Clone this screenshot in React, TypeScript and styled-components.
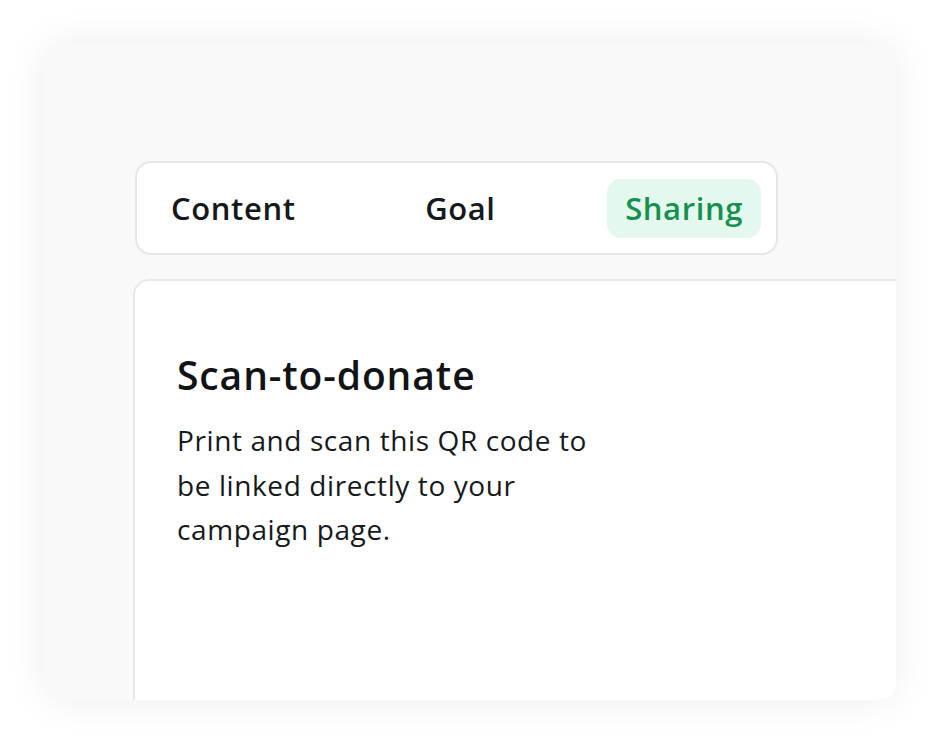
import React from "react";
import styled, { createGlobalStyle } from "styled-components";

const Global = createGlobalStyle`
  html, body { margin: 0; padding: 0; background: #ffffff; }
  body { font-family: "Open Sans", Lato, "Liberation Sans", sans-serif; }
`;

const Page = styled.div`
  width: 938px;
  height: 742px;
  padding: 44px 0 0 44px;
  box-sizing: border-box;
`;

const Frame = styled.div`
  width: 852px;
  height: 656px;
  background: #f9f9f9;
  border-radius: 16px;
  box-shadow: 0 0 40px rgba(0, 0, 0, 0.07);
  overflow: hidden;
  display: flex;
  flex-direction: column;
  align-items: flex-start;
  padding-top: 117px;
  box-sizing: border-box;
`;

const TabBar = styled.nav`
  margin-left: 91px;
  width: 643px;
  height: 94px;
  flex-shrink: 0;
  box-sizing: border-box;
  background: #ffffff;
  border: 2px solid #e6e6e6;
  border-radius: 16px;
  display: flex;
  align-items: center;
  justify-content: space-between;
  padding: 0 15px 0 16px;
`;

const Tab = styled.div<{ $active?: boolean }>`
  height: 59px;
  display: flex;
  align-items: center;
  padding: 0 18px;
  border-radius: 14px;
  font-size: 31px;
  font-weight: 600;
  letter-spacing: 0.6px;
  color: ${(p) => (p.$active ? "#14904f" : "#15191c")};
  background: ${(p) => (p.$active ? "#e5f8ee" : "transparent")};
`;

const Card = styled.section`
  margin-left: 89px;
  margin-top: 24px;
  width: 900px;
  height: 600px;
  flex-shrink: 0;
  box-sizing: border-box;
  background: #ffffff;
  border: 2px solid #e8e8e8;
  border-radius: 16px 0 0 0;
  padding: 70px 0 0 42px;
`;

const Title = styled.h2`
  margin: 0;
  font-size: 39px;
  line-height: 48px;
  font-weight: 600;
  letter-spacing: 0.9px;
  color: #111315;
`;

const Body = styled.p`
  margin: 19px 0 0;
  width: 422px;
  font-size: 28px;
  line-height: 44.5px;
  font-weight: 400;
  letter-spacing: 0.6px;
  color: #15191c;
`;

export default function App() {
  return (
    <>
      <Global />
      <Page>
        <Frame>
          <TabBar>
            <Tab>Content</Tab>
            <Tab>Goal</Tab>
            <Tab $active>Sharing</Tab>
          </TabBar>
          <Card>
            <Title>Scan-to-donate</Title>
            <Body>Print and scan this QR code to be linked directly to your campaign page.</Body>
          </Card>
        </Frame>
      </Page>
    </>
  );
}
